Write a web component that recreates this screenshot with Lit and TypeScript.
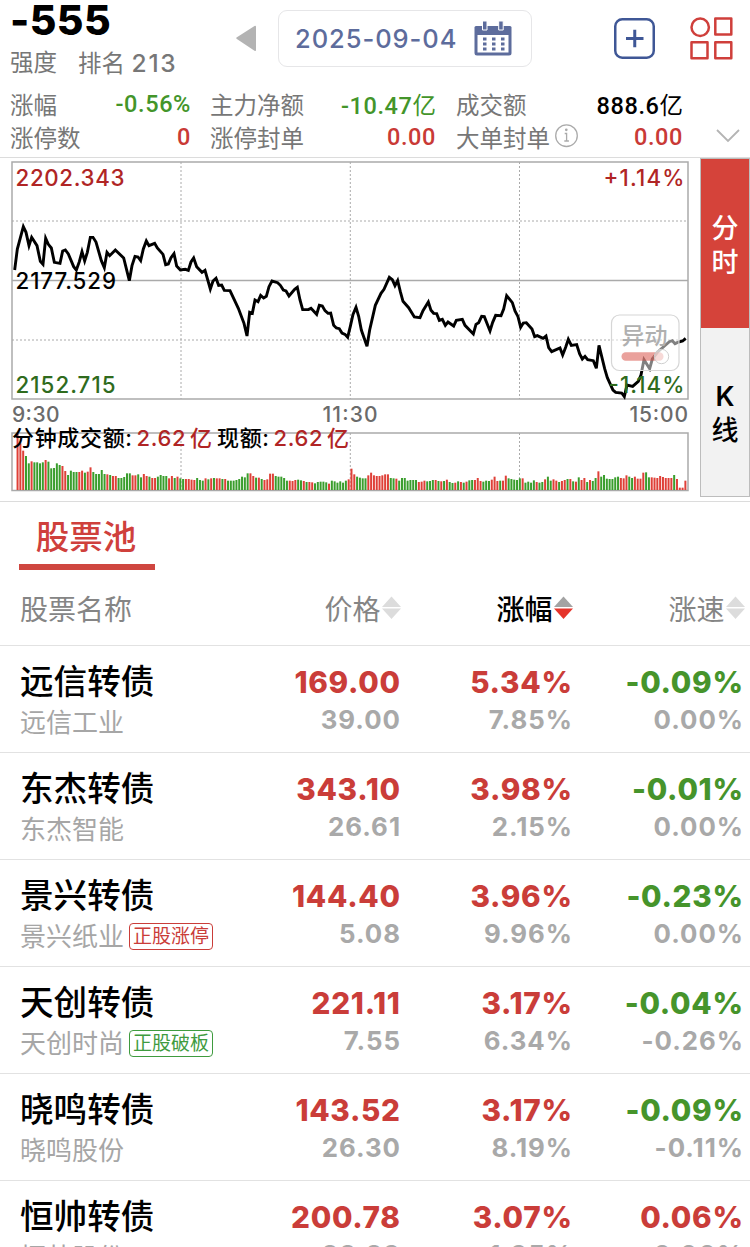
import { LitElement, html, svg, css } from "lit";
import { customElement, property } from "lit/decorators.js";
import { classMap } from "lit/directives/class-map.js";

interface Stock {
  name: string;
  sub: string;
  tag?: { text: string; tone: "up" | "down" };
  price: string;
  subPrice: string;
  change: string;
  subChange: string;
  speed: string;
  subSpeed: string;
}

const STOCKS: Stock[] = [
  { name: "远信转债", sub: "远信工业", price: "169.00", subPrice: "39.00", change: "5.34%", subChange: "7.85%", speed: "-0.09%", subSpeed: "0.00%" },
  { name: "东杰转债", sub: "东杰智能", price: "343.10", subPrice: "26.61", change: "3.98%", subChange: "2.15%", speed: "-0.01%", subSpeed: "0.00%" },
  { name: "景兴转债", sub: "景兴纸业", tag: { text: "正股涨停", tone: "up" }, price: "144.40", subPrice: "5.08", change: "3.96%", subChange: "9.96%", speed: "-0.23%", subSpeed: "0.00%" },
  { name: "天创转债", sub: "天创时尚", tag: { text: "正股破板", tone: "down" }, price: "221.11", subPrice: "7.55", change: "3.17%", subChange: "6.34%", speed: "-0.04%", subSpeed: "-0.26%" },
  { name: "晓鸣转债", sub: "晓鸣股份", price: "143.52", subPrice: "26.30", change: "3.17%", subChange: "8.19%", speed: "-0.09%", subSpeed: "-0.11%" },
  { name: "恒帅转债", sub: "恒帅股份", price: "200.78", subPrice: "88.89", change: "3.07%", subChange: "1.95%", speed: "0.06%", subSpeed: "0.00%" },
];

// Intraday price path, in thirds of a pixel.
const PRICE_LINE =
  "44,345 52,282 70,215 78,232 87,272 95,247 111,272 121,319 129,328 137,250 145,268 154,279 163,322 180,325 188,288 196,285 205,297 221,335 229,345 238,320 246,290 254,318 262,292 271,247 279,247 288,261 304,317 313,338 321,292 329,302 346,285 371,309 388,377 396,332 405,304 414,306 422,317 430,282 439,258 447,272 464,265 472,279 489,298 497,329 505,327 513,308 522,296 530,333 541,345 556,343 565,346 573,321 581,309 590,335 606,352 615,346 631,402 639,378 648,370 656,391 665,390 673,406 690,407 " +
  "715,460 732,505 741,543 749,472 757,475 765,435 774,440 782,421 791,429 799,424 807,395 816,378 833,383 841,391 850,405 858,408 867,423 884,403 892,397 900,435 908,464 925,464 933,460 950,478 958,451 967,453 975,467 984,475 992,474 1001,511 1009,519 1018,521 1026,534 1035,538 1043,547 1051,514 1059,478 1068,457 1076,484 1084,525 1101,574 1109,525 1126,451 1143,415 1152,403 1168,367 1177,374 1185,392 1193,377 1201,410 1209,439 1226,458 1243,486 1260,488 1269,467 1285,441 1293,466 1301,475 1310,476 1318,496 1327,493 1336,511 1344,501 1361,513 1369,496 1387,493 1395,511 " +
  "1420,537 1428,508 1436,503 1445,484 1453,485 1470,528 1478,502 1487,481 1503,482 1511,462 1520,422 1537,443 1545,468 1554,485 1562,517 1570,504 1579,503 1596,522 1604,545 1612,542 1629,550 1638,543 1646,578 1655,590 1680,579 1688,600 1697,577 1705,553 1714,571 1730,569 1739,597 1747,612 1755,604 1763,614 1780,617 1789,640 1797,571 1814,641 1822,668 1839,705 1847,712 1865,714 1873,725 1881,690 1898,694 1915,679 1923,660 1932,614 1949,641 1957,612 1974,590 2008,560 2017,557 2025,566 2033,562 2048,558 2057,550";

// Per-minute turnover: direction and bar height, in thirds of a pixel.
const VOLUME =
  "r168 r140 r118 g102 g80 r86 g83 g83 g80 g83 r90 g85 g65 g66 g80 g75 r72 r57 g45 g58 g54 g54 r54 r58 g52 r55 r68 g54 g48 g48 g60 g48 r47 g45 r42 r42 g36 g36 g39 g50 g50 r44 r44 g47 g38 r48 r42 g40 r36 r36 g40 g45 g42 g42 r35 r42 g36 r40 g35 " +
  "g33 r33 r33 r31 r30 g36 g30 g28 r35 g32 r35 g36 r35 r35 g33 r33 g28 g28 g28 g30 g33 g40 g38 g50 r50 r42 g37 r37 g33 r30 r32 r49 r49 g42 g40 g40 g36 g28 r28 r27 r30 g31 g29 r27 g24 r24 r23 g20 g24 g25 g25 g23 r19 g28 g26 g22 g26 g22 g28 r32 " +
  "r64 r47 g40 g37 g35 g35 r44 r52 r44 r42 r42 r44 r47 r47 g36 g35 r34 g28 g36 g36 g28 g30 g30 g30 r24 r25 r28 g26 g27 g30 r30 g27 r26 g27 r31 g24 g21 r22 g26 r24 g22 r25 g29 g30 r30 r36 r27 g25 g28 g27 r31 r40 r27 g28 r28 r43 g35 g33 g31 g30 " +
  "g35 r35 g22 g25 g22 g29 r24 g22 g24 r32 g40 g28 r32 r28 g24 r27 r30 g33 r33 g26 r25 g38 r30 r36 g24 r30 g27 g36 r56 g40 g45 g34 g33 g33 g38 g40 r36 r35 r44 g40 g36 r40 r34 r34 r52 g53 g38 r38 r37 r36 r42 r39 r36 r36 r36 g45 r33 r7 r7 r28";

@customElement("top-header")
export class TopHeader extends LitElement {
  static styles = css`
    :host { display: block; height: 157px; border-bottom: 1px solid #dcdcdc; color: #777; }
    .bar { display: flex; height: 83px; }
    .score { box-sizing: border-box; width: 225px; padding-left: 10px; flex: none; }
    .num { font-size: 41px; font-weight: 800; line-height: 40px; color: #000; letter-spacing: 0.4px; }
    .rank { display: flex; gap: 21px; font-size: 23.5px; line-height: 30px; margin-top: 8px; white-space: nowrap; }
    .rank b { font-weight: 500; font-size: 24.5px; letter-spacing: 1.7px; }
    .prev { margin: 25px 22px 0 11px; flex: none; }
    .date { box-sizing: border-box; width: 254px; height: 57px; margin-top: 10px; border: 1.5px solid #e6e6e8; border-radius: 9px; display: flex; align-items: center; padding-left: 16px; gap: 16.500px; font-size: 25.5px; font-weight: 500; color: #5d6c9c; letter-spacing: 0.95px; flex: none; }
    .add { margin: 18px 35px 0 82px; flex: none; }
    .grid { margin-top: 17px; flex: none; }
    .stats { display: flex; }
    .cols { display: grid; grid-template-columns: 181px 19px 226px 20px 227px; padding-left: 10px; row-gap: 1px; padding-top: 4.500px; }
    .stat { display: flex; justify-content: space-between; align-items: center; height: 32px; font-size: 23.5px; white-space: nowrap; }
    .label { display: flex; align-items: center; gap: 4px; }
    .value { padding-top: 1px; font-family: Roboto, "Noto Sans CJK SC", sans-serif; font-weight: 500; font-size: 23.5px; letter-spacing: 0.6px; }
    .unit { font-weight: 400; letter-spacing: 0; }
    .up { color: #c93a36; }
    .down { color: #43952a; }
    .flat { color: #000; }
    .more { margin: 46px 0 0 33px; }
    svg { display: block; }
  `;
  private stat(label: string, value: string, tone: string, unit = "", info = false) {
    return html`<div class="stat">
      <span class="label">${label}${info
        ? html`<svg width="25" height="25" viewBox="0 0 25 25" fill="none" stroke="#aaa" stroke-width="1.3"><circle cx="12.5" cy="11.7" r="10.8" /><path d="M10.700 9.500h1.900v7.500M10.300 17h4.600" /><circle cx="12.3" cy="5.8" r=".7" fill="#aaa" /></svg>`
        : ""}</span>
      <span class="value ${tone}">${value}<span class="unit">${unit}</span></span>
    </div>`;
  }
  render() {
    return html`
      <div class="bar">
        <div class="score">
          <div class="num">-555</div>
          <div class="rank"><span>强度</span><span>排名 <b>213</b></span></div>
        </div>
        <svg class="prev" width="20" height="27" viewBox="0 0 20 27"><path d="M0.5 12.5 Q0 13 .5 13.8L18.5 25.8Q20 26.5 20 25V2Q20 .3 18.5 1Z" fill="#b3b3b3" /></svg>
        <div class="date">
          <span>2025-09-04</span>
          <svg width="38" height="35" viewBox="0 0 38 35">
            <path d="M2 5h34q1.5 0 1.500 1.500V32q0 2.500-2.500 2.500H3Q.5 34.500.5 32V6.500Q.5 5 2 5Z" fill="#5d6c9c" />
            <path d="M3.500 14h31v17.500h-31z" fill="#fff" />
            <path d="M8.500 0h4.500v9H8.500zM24.700 0h4.500v9h-4.500z" fill="#5d6c9c" stroke="#fff" stroke-width="1" />
            <path d="M9 16.500h3.500v3H9zm9 0h3.500v3H18zm9 0h3.500v3H27zM9 21.500h3.500v3H9zm9 0h3.500v3H18zm9 0h3.500v3H27zM9 26.500h3.500v3H9zm9 0h3.500v3H18zm9 0h3.500v3H27z" fill="#5d6c9c" />
          </svg>
        </div>
        <svg class="add" width="41" height="41" viewBox="0 0 41 41" fill="none" stroke="#3f5796"><rect x="1.250" y="1.250" width="38.500" height="38.500" rx="7" stroke-width="2.500" /><path d="M12 20.500h17.500M20.750 11.700v17.600" stroke-width="3" /></svg>
        <svg class="grid" width="43" height="43" viewBox="0 0 43 43" fill="none" stroke="#cf3f3b" stroke-width="2.500" stroke-linejoin="round"><circle cx="10.200" cy="10.200" r="8.700" /><rect x="25.300" y="1.500" width="16" height="16" /><rect x="1.500" y="25.300" width="16" height="16" /><rect x="25.300" y="25.300" width="16" height="16" /></svg>
      </div>
      <div class="stats">
        <div class="cols">
          ${this.stat("涨幅", "-0.56%", "down")}<i></i>
          ${this.stat("主力净额", "-10.47", "down", "亿")}<i></i>
          ${this.stat("成交额", "888.6", "flat", "亿")}
          ${this.stat("涨停数", "0", "up")}<i></i>
          ${this.stat("涨停封单", "0.00", "up")}<i></i>
          ${this.stat("大单封单", "0.00", "up", "", true)}
        </div>
        <svg class="more" width="24" height="14" viewBox="0 0 24 14" fill="none" stroke="#b4b4b4" stroke-width="1.800"><path d="M1 1l11 11L23 1" /></svg>
      </div>`;
  }
}

@customElement("minute-chart")
export class MinuteChart extends LitElement {
  static styles = css`
    :host { display: flex; box-sizing: border-box; height: 344px; border-bottom: 1.500px solid #dcdcdc; }
    svg { display: block; flex: none; }
    text { font-family: Inter, "Noto Sans CJK SC", sans-serif; font-size: 22.300px; font-weight: 500; }
    .up { fill: #b02525; }
    .down { fill: #2f6b1d; }
    .axis { fill: #6b6b6b; font-size: 21px; }
    .cap { font-size: 22px; }
    .toggle { fill: #b0b0b0; font-size: 23px; }
    .dash { stroke: #aaa; stroke-dasharray: 2 2; fill: none; }
    .frame { stroke: #aaa; stroke-width: 1.500; fill: none; }
    .modes { display: flex; flex-direction: column; box-sizing: border-box; width: 50px; height: 339px; border: 1.500px solid #bdbdbd; }
    .mode { box-sizing: border-box; display: flex; flex-direction: column; align-items: center; justify-content: center; height: 169px; padding-top: 5px; font-size: 27px; line-height: 34px; font-weight: 500; color: #000; background: #f2f2f2; }
    .latin { font-weight: 600; }
    .on { background: #d5433a; color: #fff; }
  `;
  render() {
    return html`
      <svg width="700" height="342" viewBox="0 158 700 342">
        <rect class="frame" x="12" y="162" width="676" height="237" />
        <path class="frame" d="M12 280.500H688" />
        <path class="dash" d="M12 221H688M12 340H688M181 162V399M350.300 162V399M519.500 162V399M181 433V490M350.300 433V490M519.500 433V490" />
        <text class="up" x="15.500" y="185.500" textLength="109">2202.343</text>
        <text x="15.500" y="289" textLength="100.500">2177.529</text>
        <text class="down" x="15.500" y="392.700" textLength="100">2152.715</text>
        <text class="up" x="603.500" y="185.500" textLength="81">+1.14%</text>
        <g transform="translate(0 155) scale(.33333)">
          <polyline points=${PRICE_LINE} fill="none" stroke="#000" stroke-width="8.700" stroke-linejoin="miter" stroke-miterlimit="4" />
        </g>
        <text class="down" x="608.500" y="392.700" textLength="76">-1.14%</text>
        <g>
          <rect x="611.500" y="315" width="67.500" height="55.500" rx="8" fill="#fff" fill-opacity=".5" stroke="#d6d6d6" stroke-width="1.200" />
          <text class="toggle" x="621.500" y="343.500" textLength="46">异动</text>
          <rect x="621.500" y="352.300" width="42" height="8.500" rx="4.250" fill="#d5433a" fill-opacity=".5" />
          <circle cx="661.500" cy="356.500" r="7.200" fill="#fff" fill-opacity=".6" stroke="#cfcfcf" />
        </g>
        <text class="axis" x="12" y="422.200" textLength="47.500">9:30</text>
        <text class="axis" x="322.500" y="422.200" textLength="55">11:30</text>
        <text class="axis" x="629.500" y="422.200" textLength="58.500">15:00</text>
        <rect class="frame" x="12" y="433" width="676" height="57.500" />
        ${VOLUME.split(" ").map((bar, i) => {
          const h = Number(bar.slice(1)) / 3;
          return svg`<rect x=${12 + 2.806 * (i + 2) - 1.05} y=${490 - h} width="2" height=${h} fill=${bar[0] === "r" ? "#df4038" : "#3a9e2d"} />`;
        })}
        <text class="cap" x="12" y="446" textLength="120">分钟成交额:</text>
        <text class="cap up" x="136.500" y="446" textLength="49">2.62</text>
        <text class="cap up" x="190" y="446">亿</text>
        <text class="cap" x="217" y="446" textLength="52">现额:</text>
        <text class="cap up" x="273.500" y="446" textLength="49">2.62</text>
        <text class="cap up" x="327" y="446">亿</text>
      </svg>
      <div class="modes">
        <div class="mode on"><span>分</span><span>时</span></div>
        <div class="mode"><span class="latin">K</span><span>线</span></div>
      </div>`;
  }
}

@customElement("sort-label")
export class SortLabel extends LitElement {
  @property() label = "";
  @property({ type: Boolean }) active = false;
  static styles = css`
    :host { display: flex; justify-content: flex-end; align-items: center; gap: 1px; font-size: 28px; color: #858585; }
    .active { color: #000; font-weight: 500; }
    svg { display: block; }
  `;
  render() {
    return html`<span class=${classMap({ active: this.active })}>${this.label}</span>
      <svg width="19" height="24" viewBox="0 0 19 24"><path d="M9.500 .5L19 11H0z" fill=${this.active ? "#a3a3a3" : "#dcdcdc"} /><path d="M0 12.500H19L9.500 23z" fill=${this.active ? "#e5342b" : "#dcdcdc"} /></svg>`;
  }
}

@customElement("stock-row")
export class StockRow extends LitElement {
  @property({ attribute: false }) stock!: Stock;
  static styles = css`
    :host { display: grid; box-sizing: border-box; grid-template-columns: 230px 150px 172px 171px; height: 107px; padding: 14px 0 0 20px; border-bottom: 1.500px solid #e2e2e2; }
    .name { font-size: 33.600px; font-weight: 500; line-height: 44px; color: #000; }
    .sub { display: flex; align-items: center; gap: 5px; height: 37px; font-size: 26px; line-height: 37px; color: #a6a6a6; white-space: nowrap; }
    .tag { box-sizing: border-box; height: 27px; border: 1.500px solid; border-radius: 4px; padding: 0 3px; font-size: 19px; line-height: 26px; }
    .num { text-align: right; white-space: nowrap; }
    .main { font-size: 29.700px; font-weight: 800; line-height: 44px; letter-spacing: 0.700px; margin-right: -0.700px; }
    .minor { font-size: 25.800px; font-weight: 700; line-height: 32px; color: #a9a9a9; letter-spacing: 1px; margin-right: -1px; }
    .up { color: #ca3d39; }
    .down { color: #46942b; }
    .tag.down { color: #3f9b3f; }
  `;
  private cell(main: string, minor: string) {
    return html`<div class="num"><div class="main ${main.startsWith("-") ? "down" : "up"}">${main}</div><div class="minor">${minor}</div></div>`;
  }
  render() {
    const s = this.stock;
    return html`<div>
        <div class="name">${s.name}</div>
        <div class="sub"><span>${s.sub}</span>${s.tag ? html`<span class="tag ${s.tag.tone}">${s.tag.text}</span>` : ""}</div>
      </div>
      ${this.cell(s.price, s.subPrice)}${this.cell(s.change, s.subChange)}${this.cell(s.speed, s.subSpeed)}`;
  }
}

@customElement("app-root")
export class AppRoot extends LitElement {
  static styles = css`
    :host { display: block; width: 750px; height: 1247px; overflow: hidden; background: #fff; font-family: Inter, "Noto Sans CJK SC", sans-serif; }
    .tabs { display: flex; height: 68px; padding-left: 19px; }
    .tab { box-sizing: border-box; width: 136px; height: 68px; padding-right: 2px; border-bottom: 6px solid #cf4640; font-size: 33.500px; font-weight: 500; line-height: 70px; text-align: center; color: #cf403c; }
    .head { display: grid; box-sizing: border-box; grid-template-columns: 230px 150.500px 172px 172px; align-items: center; height: 76px; padding: 1px 0 0 20px; border-bottom: 1.500px solid #e2e2e2; font-size: 28px; color: #858585; }
  `;
  render() {
    return html`
      <top-header></top-header>
      <minute-chart></minute-chart>
      <div class="tabs"><div class="tab">股票池</div></div>
      <div class="head">
        <span>股票名称</span>
        <sort-label label="价格"></sort-label>
        <sort-label label="涨幅" active></sort-label>
        <sort-label label="涨速"></sort-label>
      </div>
      ${STOCKS.map((s) => html`<stock-row .stock=${s}></stock-row>`)}`;
  }
}
